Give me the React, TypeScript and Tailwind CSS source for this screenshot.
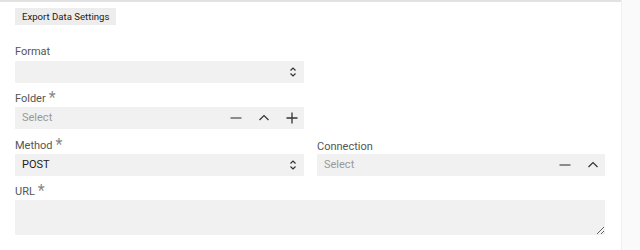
import React from "react";

const Chevrons = () => (
  <svg width="8" height="12" viewBox="0 0 8 12" fill="none" stroke="#333" strokeWidth="1.2">
    <path d="M1.5 4.5 L4 2 L6.5 4.5" />
    <path d="M1.5 7.5 L4 10 L6.5 7.5" />
  </svg>
);

const Minus = () => (
  <svg width="12" height="12" viewBox="0 0 12 12" stroke="#555" strokeWidth="1.3">
    <path d="M0.5 6 H11.5" />
  </svg>
);

const Up = () => (
  <svg width="12" height="12" viewBox="0 0 12 12" fill="none" stroke="#333" strokeWidth="1.2">
    <path d="M1.5 8 L6 3.5 L10.5 8" />
  </svg>
);

const Plus = () => (
  <svg width="12" height="12" viewBox="0 0 12 12" stroke="#333" strokeWidth="1.3">
    <path d="M0.5 6 H11.5 M6 0.5 V11.5" />
  </svg>
);

const Label = ({ children, req }: { children: React.ReactNode; req?: boolean }) => (
  <div className="flex items-start h-[14px] text-[11px] leading-[14px] text-[#555]">
    <span>{children}</span>
    {req && <span className="ml-[3px] text-[16px] leading-[12px] text-[#888]">*</span>}
  </div>
);

export default function App() {
  return (
    <div
      className="flex w-[640px] h-[250px] bg-white overflow-hidden"
      style={{ fontFamily: "Roboto, 'Liberation Sans', sans-serif" }}
    >
      <div className="w-[621px] border-t-2 border-[#e2e2e2] px-[15px] pt-[6px]">
        <div className="flex w-fit items-center h-[17px] px-[7px] bg-[#ededed] text-[9.6px] leading-[17px] text-[#222]">
          Export Data Settings
        </div>

        <div className="mt-[20px] w-[289px]">
          <Label>Format</Label>
          <div className="mt-[2px] h-[22px] bg-[#f1f1f1] flex items-center justify-end pr-[7px]">
            <Chevrons />
          </div>
        </div>

        <div className="mt-[9px] w-[289px]">
          <Label req>Folder</Label>
          <div className="mt-[1px] h-[22px] bg-[#f1f1f1] flex items-center pl-[7px] pr-[6px]">
            <span className="flex-1 text-[11px] text-[#999]">Select</span>
            <div className="flex items-center gap-[16px]">
              <Minus />
              <Up />
              <Plus />
            </div>
          </div>
        </div>

        <div className="mt-[10px] grid grid-cols-[289px_288px] gap-x-[13px]">
          <div>
            <Label req>Method</Label>
            <div className="mt-[1px] h-[22px] bg-[#f1f1f1] flex items-center pl-[7px] pr-[7px]">
              <span className="flex-1 text-[11px] text-[#222]">POST</span>
              <Chevrons />
            </div>
          </div>
          <div>
            <div className="pt-[1px]"><Label>Connection</Label></div>
            <div className="h-[22px] bg-[#f1f1f1] flex items-center pl-[7px] pr-[6px]">
              <span className="flex-1 text-[11px] text-[#999]">Select</span>
              <div className="flex items-center gap-[16px]">
                <Minus />
                <Up />
              </div>
            </div>
          </div>
        </div>

        <div className="mt-[9px] w-[590px]">
          <Label req>URL</Label>
          <textarea className="mt-[1px] block w-full h-[35px] bg-[#f1f1f1] outline-none resize-y" />
        </div>
      </div>
      <div className="flex-1 bg-[#fafafa] border-l border-[#f0f0f0]" />
    </div>
  );
}
